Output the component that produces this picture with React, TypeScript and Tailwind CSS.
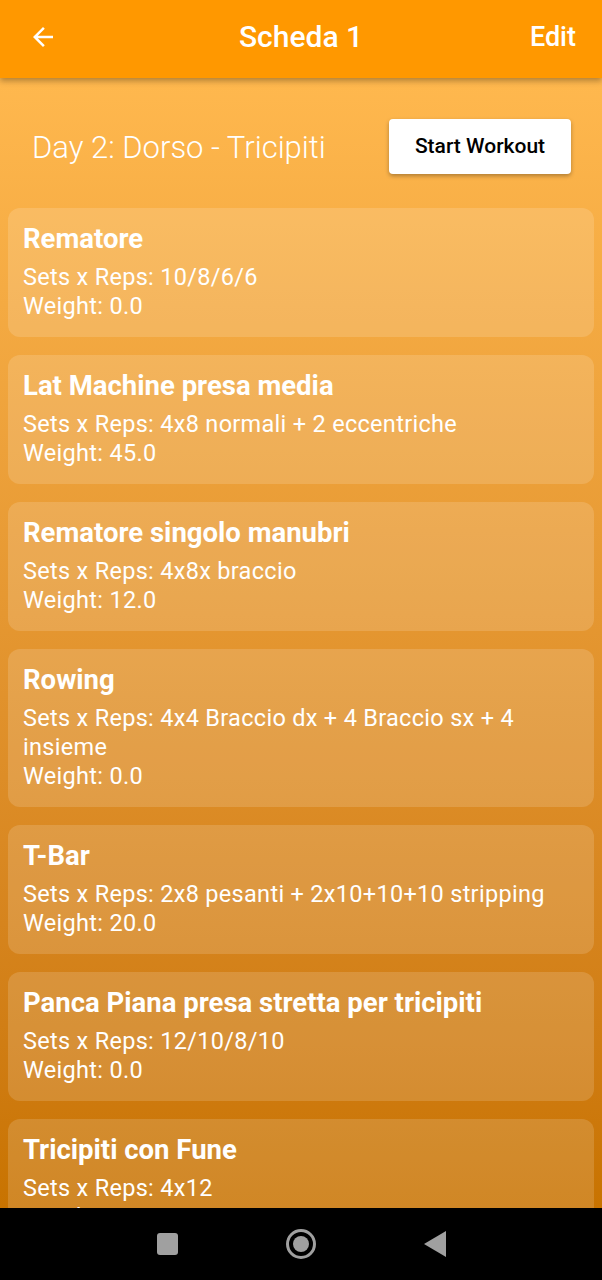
import React from "react";

const exercises = [
  { name: "Rematore", reps: "10/8/6/6", weight: "0.0" },
  { name: "Lat Machine presa media", reps: "4x8 normali + 2 eccentriche", weight: "45.0" },
  { name: "Rematore singolo manubri", reps: "4x8x braccio", weight: "12.0" },
  { name: "Rowing", reps: "4x4 Braccio dx + 4 Braccio sx + 4 insieme", weight: "0.0" },
  { name: "T-Bar", reps: "2x8 pesanti + 2x10+10+10 stripping", weight: "20.0" },
  { name: "Panca Piana presa stretta per tricipiti", reps: "12/10/8/10", weight: "0.0" },
  { name: "Tricipiti con Fune", reps: "4x12", weight: "0.0" },
];

export default function App() {
  return (
    <div className="w-[602px] h-[1280px] flex flex-col overflow-hidden font-['Roboto',sans-serif] bg-black">
      <div className="relative z-10 h-[78px] shrink-0 bg-[#FF9800] flex items-center justify-between pl-[28px] pr-[26px] pb-[4px] shadow-[0_3px_6px_rgba(0,0,0,0.3)]">
        <svg width="30" height="30" viewBox="0 0 24 24" className="text-white">
          <path d="M20 11H7.83l5.59-5.59L12 4l-8 8 8 8 1.41-1.41L7.83 13H20v-2z" fill="currentColor" />
        </svg>
        <div className="absolute left-0 right-0 top-0 h-[73px] flex items-center justify-center pointer-events-none">
          <span className="text-white text-[30px] font-medium">Scheda 1</span>
        </div>
        <span className="text-white text-[27px] font-medium">Edit</span>
      </div>
      <div className="relative z-0 flex-1 overflow-hidden bg-gradient-to-b from-[#FFB84E] to-[#C87300]">
        <div className="flex items-center justify-between pl-[32px] pr-[31px] pt-[41px] pb-[34px]">
          <span className="mt-[4px] text-white text-[31px] font-light">Day 2: Dorso - Tricipiti</span>
          <button className="bg-white rounded-[4px] h-[55px] w-[182px] text-black text-[21px] font-medium shadow-[0_2px_4px_rgba(0,0,0,0.3)]">
            Start Workout
          </button>
        </div>
        <div className="flex flex-col gap-[18px] px-[8px]">
          {exercises.map((e) => (
            <div key={e.name} className="bg-white/15 rounded-[12px] px-[15px] pt-[16px] pb-[16px] text-white">
              <div className="text-[27.5px] font-bold leading-[30px]">{e.name}</div>
              <div className="mt-[9px] text-[23.5px] leading-[29px] tracking-[0.3px]">Sets x Reps: {e.reps}</div>
              <div className="text-[23.5px] leading-[29px] tracking-[0.3px]">Weight: {e.weight}</div>
            </div>
          ))}
        </div>
      </div>
      <div className="relative z-10 h-[72px] shrink-0 bg-black flex items-center justify-center">
        <div className="flex items-center gap-[108px]">
          <div className="w-[21px] h-[22px] rounded-[3px] bg-[#A0A0A0]" />
          <div className="w-[30px] h-[30px] rounded-full border-[3px] border-[#A0A0A0] flex items-center justify-center">
            <div className="w-[16px] h-[16px] rounded-full bg-[#A0A0A0]" />
          </div>
          <svg width="22" height="26" viewBox="0 0 22 26">
            <path d="M22 0 L22 26 L0 13 Z" fill="#A0A0A0" />
          </svg>
        </div>
      </div>
    </div>
  );
}
